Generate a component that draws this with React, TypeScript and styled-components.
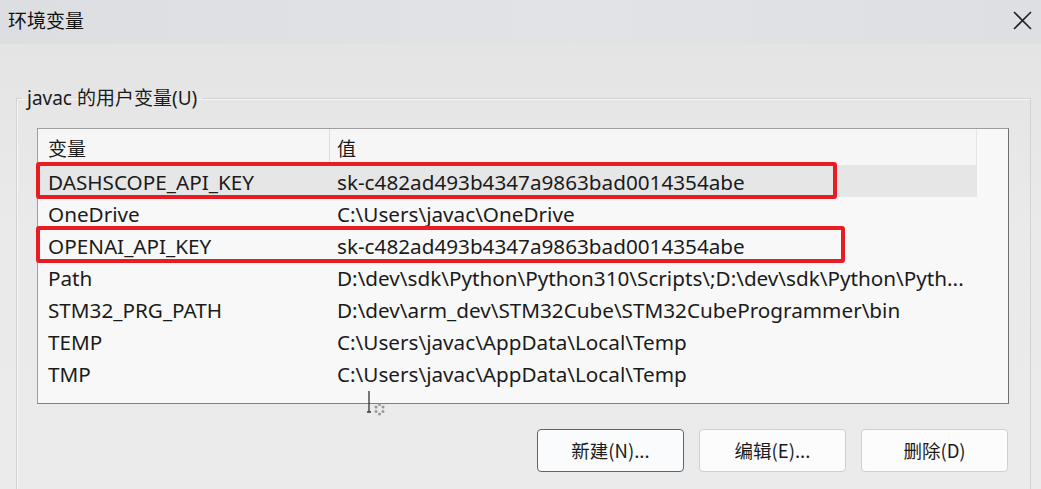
import React from "react";
import styled, { createGlobalStyle, css } from "styled-components";

const GlobalStyle = createGlobalStyle`
  html, body { margin: 0; padding: 0; }
  body {
    background: #ebebeb;
    font-family: "Noto Sans", "Noto Sans CJK SC", sans-serif;
    color: #1b1b1b;
  }
  * { box-sizing: border-box; }
`;

const Window = styled.div`
  width: 1041px;
  height: 489px;
  display: flex;
  flex-direction: column;
  overflow: hidden;
  position: relative;
`;

const TitleBar = styled.div`
  height: 44px;
  flex: none;
  display: flex;
  align-items: center;
  justify-content: space-between;
  padding: 0 9px 5px 8px;
  background: linear-gradient(90deg, #dcdee1 0%, #e1e3e7 55%, #dddfe3 100%);
`;

const Title = styled.div`
  font-family: "Noto Sans CJK SC", sans-serif;
  font-size: 19px;
  line-height: 24px;
  color: #111;
`;

const CloseButton = styled.div`
  width: 20px;
  height: 20px;
  display: flex;
  align-items: center;
  justify-content: center;
  margin-top: 2px;
`;

const Body = styled.div`
  flex: 1;
  background: linear-gradient(180deg, #e4e4e4 0%, #eaeaea 40%, #ebebeb 100%);
  padding: 41px 0 0 16px;
`;

const Group = styled.fieldset`
  width: 1015px;
  margin: 0;
  border: 1px solid #d3d3d3;
  box-shadow: inset 1px 1px 0 #f6f6f6;
  padding: 17px 21px 40px 20px;
  display: flex;
  flex-direction: column;
`;

const GroupLabel = styled.legend`
  font-size: 19px;
  line-height: 26px;
  padding: 0 5px;
  margin-left: -15px;
  color: #1b1b1b;
`;

const ListBox = styled.div`
  height: 276px;
  background: #f8f8f8;
  border: 1px solid #9e9e9e;
  border-right-color: #6f6f6f;
  border-bottom-color: #808080;
  display: flex;
  flex-direction: column;
  position: relative;
  padding-right: 31px;
`;

const HeaderRow = styled.div`
  height: 36px;
  display: grid;
  grid-template-columns: 291px 1fr;
  background: #f6f6f6;
  border-right: 1px solid #e6e6e6;
`;

const HeaderCell = styled.div<{ $divider?: boolean }>`
  display: flex;
  align-items: center;
  padding-left: ${(p) => (p.$divider ? "7px" : "10px")};
  font-family: "Noto Sans CJK SC", sans-serif;
  font-size: 19px;
  ${(p) =>
    p.$divider &&
    css`
      border-left: 1px solid #dedede;
    `}
`;

const Row = styled.div<{ $selected?: boolean }>`
  height: 32px;
  display: grid;
  grid-template-columns: 291px 1fr;
  position: relative;
  background: ${(p) => (p.$selected ? "#e6e6e6" : "transparent")};
`;

const Cell = styled.div<{ $value?: boolean }>`
  display: flex;
  align-items: center;
  padding-left: ${(p) => (p.$value ? "8px" : "10px")};
  font-size: 20.7px;
  white-space: nowrap;
  overflow: hidden;
  padding-top: 1px;
`;

const Highlight = styled.div`
  position: absolute;
  left: -2px;
  top: -3px;
  height: 37px;
  border: 4.5px solid #e81c24;
  border-radius: 3px;
  pointer-events: none;
`;

const Buttons = styled.div`
  display: flex;
  justify-content: flex-end;
  gap: 15px;
  margin-top: 25px;
  padding-right: 1px;
`;

const Button = styled.button<{ $primary?: boolean }>`
  width: 147px;
  height: 43px;
  border-radius: 4px;
  background: #fcfcfc;
  border: 1px solid #cfcfcf;
  font-family: "Noto Sans CJK SC", sans-serif;
  font-size: 18.5px;
  color: #1b1b1b;
  padding: 0 0 2px;
  ${(p) =>
    p.$primary &&
    css`
      border: 1.5px solid #4d6b80;
      background: #f9fbfc;
    `}
`;

const Cursor = styled.svg`
  position: absolute;
  left: 364px;
  top: 389px;
`;

const rows = [
  { name: "DASHSCOPE_API_KEY", value: "sk-c482ad493b4347a9863bad0014354abe", selected: true, mark: 801 },
  { name: "OneDrive", value: "C:\\Users\\javac\\OneDrive" },
  { name: "OPENAI_API_KEY", value: "sk-c482ad493b4347a9863bad0014354abe", mark: 809 },
  { name: "Path", value: "D:\\dev\\sdk\\Python\\Python310\\Scripts\\;D:\\dev\\sdk\\Python\\Pyth..." },
  { name: "STM32_PRG_PATH", value: "D:\\dev\\arm_dev\\STM32Cube\\STM32CubeProgrammer\\bin" },
  { name: "TEMP", value: "C:\\Users\\javac\\AppData\\Local\\Temp" },
  { name: "TMP", value: "C:\\Users\\javac\\AppData\\Local\\Temp" },
];

export default function App() {
  return (
    <>
      <GlobalStyle />
      <Window>
        <TitleBar>
          <Title>环境变量</Title>
          <CloseButton>
            <svg width="19" height="19" viewBox="0 0 19 19">
              <path d="M1 1 L18 18 M18 1 L1 18" stroke="#222" strokeWidth="1.6" fill="none" />
            </svg>
          </CloseButton>
        </TitleBar>
        <Body>
          <Group>
            <GroupLabel>javac 的用户变量(U)</GroupLabel>
            <ListBox>
              <HeaderRow>
                <HeaderCell>变量</HeaderCell>
                <HeaderCell $divider>值</HeaderCell>
              </HeaderRow>
              {rows.map((r) => (
                <Row key={r.name} $selected={r.selected}>
                  <Cell>{r.name}</Cell>
                  <Cell $value>{r.value}</Cell>
                  {r.mark && <Highlight style={{ width: r.mark }} />}
                </Row>
              ))}
            </ListBox>
            <Buttons>
              <Button $primary>新建(N)...</Button>
              <Button>编辑(E)...</Button>
              <Button>删除(D)</Button>
            </Buttons>
          </Group>
        </Body>
        <Cursor width="26" height="30" viewBox="0 0 26 30">
          <path d="M5 2 V23 M3 23 H7" stroke="#333" strokeWidth="1.3" fill="none" />
          <g fill="#9a9a9a">
            <circle cx="12" cy="18" r="1.5" />
            <circle cx="15.5" cy="15.5" r="1.5" />
            <circle cx="19" cy="18" r="1.5" />
            <circle cx="19" cy="22.5" r="1.5" />
            <circle cx="15.5" cy="25" r="1.5" />
            <circle cx="12" cy="22.5" r="1.5" />
          </g>
        </Cursor>
      </Window>
    </>
  );
}
